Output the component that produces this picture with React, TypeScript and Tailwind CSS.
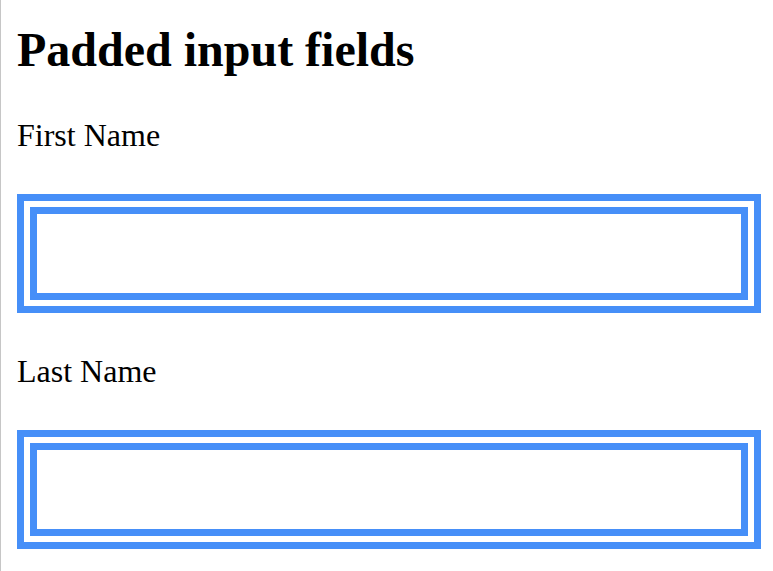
export default function App() {
  const fields = ["First Name", "Last Name"];
  return (
    <div
      className="min-h-screen bg-white border-l border-[#c6c6c6] pl-4 pt-[23px] text-black"
      style={{ fontFamily: '"Liberation Serif", "Times New Roman", serif' }}
    >
      <h1 className="text-[48px] font-bold leading-[53px]">Padded input fields</h1>
      {fields.map((f, i) => (
        <div key={f} className={i === 0 ? "mt-[42px]" : "mt-[41px]"}>
          <label className="block text-[32px] leading-[35px]">{f}</label>
          <div className="mt-[41px] w-[744px] border-[7px] border-[#468ff8] p-[6px]">
            <input
              type="text"
              className="block w-full h-[93px] border-[7px] border-[#468ff8] bg-white outline-none"
            />
          </div>
        </div>
      ))}
    </div>
  );
}
